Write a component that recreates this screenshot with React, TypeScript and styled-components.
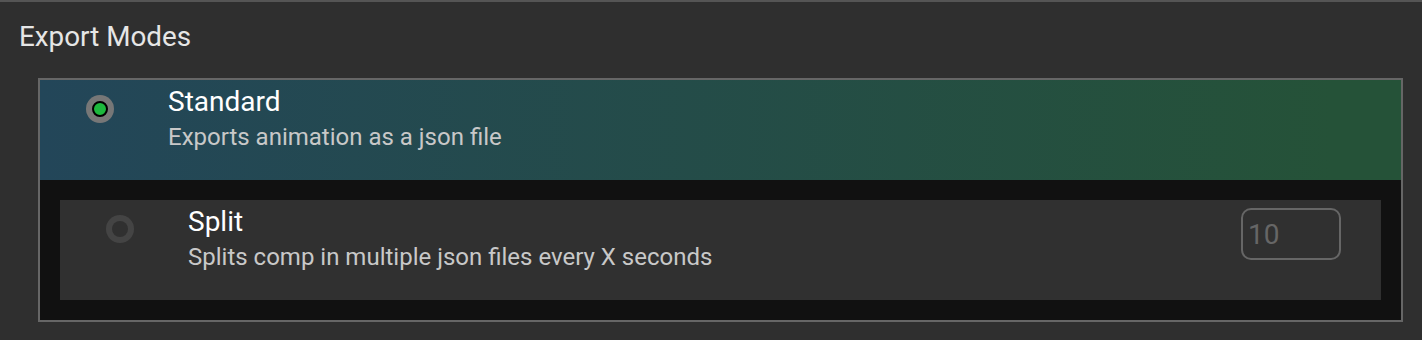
import React from "react";
import styled, { createGlobalStyle } from "styled-components";

const Global = createGlobalStyle`
  html, body { margin: 0; padding: 0; background: #2f2f2f; }
  body { font-family: Roboto, "Noto Sans", sans-serif; }
`;

const Page = styled.div`
  width: 1422px;
  height: 340px;
  box-sizing: border-box;
  border-top: 2px solid #555555;
  background: #2f2f2f;
  padding: 0 19px 0 38px;
  display: flex;
  flex-direction: column;
`;

const Heading = styled.h2`
  margin: 18px 0 0 -19px;
  height: 58px;
  font-size: 27.8px;
  font-weight: 400;
  line-height: 34px;
  color: #e6e6e6;
`;

const Modes = styled.div`
  width: 1365px;
  box-sizing: border-box;
  border: 2px solid #666666;
  background: #111111;
  display: flex;
  flex-direction: column;
`;

const Option = styled.div<{ $active?: boolean }>`
  display: flex;
  align-items: flex-start;
  height: 100px;
  box-sizing: border-box;
  padding: 15px 40px 0 46px;
  background: ${(p) =>
    p.$active ? "linear-gradient(to right, #234659 0%, #255238 95%)" : "#303030"};
  margin: ${(p) => (p.$active ? "0" : "20px")};
`;

const Radio = styled.span<{ $active?: boolean }>`
  flex: none;
  width: 28px;
  height: 28px;
  box-sizing: border-box;
  border-radius: 50%;
  background: ${(p) => (p.$active ? "#777777" : "#444444")};
  display: flex;
  align-items: center;
  justify-content: center;
  &::after {
    content: "";
    width: 16px;
    height: 16px;
    box-sizing: border-box;
    border-radius: 50%;
    background: ${(p) => (p.$active ? "#1db83d" : "#303030")};
    border: ${(p) => (p.$active ? "2px solid #000" : "none")};
  }
`;

const Texts = styled.div`
  margin-left: 54px;
  flex: 1;
  display: flex;
  flex-direction: column;
  margin-top: -10px;
`;

const Title = styled.div`
  font-size: 28px;
  line-height: 34px;
  color: #ffffff;
`;

const Desc = styled.div`
  font-size: 24px;
  line-height: 36px;
  color: #c8c8c8;
`;

const NumberBox = styled.input`
  flex: none;
  width: 100px;
  height: 52px;
  box-sizing: border-box;
  margin-top: -7px;
  border: 2px solid #666666;
  border-radius: 10px;
  background: transparent;
  color: #666666;
  font-family: Roboto, "Noto Sans", sans-serif;
  font-size: 28px;
  padding: 0 5px;
  outline: none;
`;

export default function App() {
  return (
    <>
      <Global />
      <Page>
        <Heading>Export Modes</Heading>
        <Modes>
          <Option $active>
            <Radio $active />
            <Texts>
              <Title>Standard</Title>
              <Desc>Exports animation as a json file</Desc>
            </Texts>
          </Option>
          <Option>
            <Radio />
            <Texts>
              <Title>Split</Title>
              <Desc>Splits comp in multiple json files every X seconds</Desc>
            </Texts>
            <NumberBox defaultValue="10" disabled />
          </Option>
        </Modes>
      </Page>
    </>
  );
}
